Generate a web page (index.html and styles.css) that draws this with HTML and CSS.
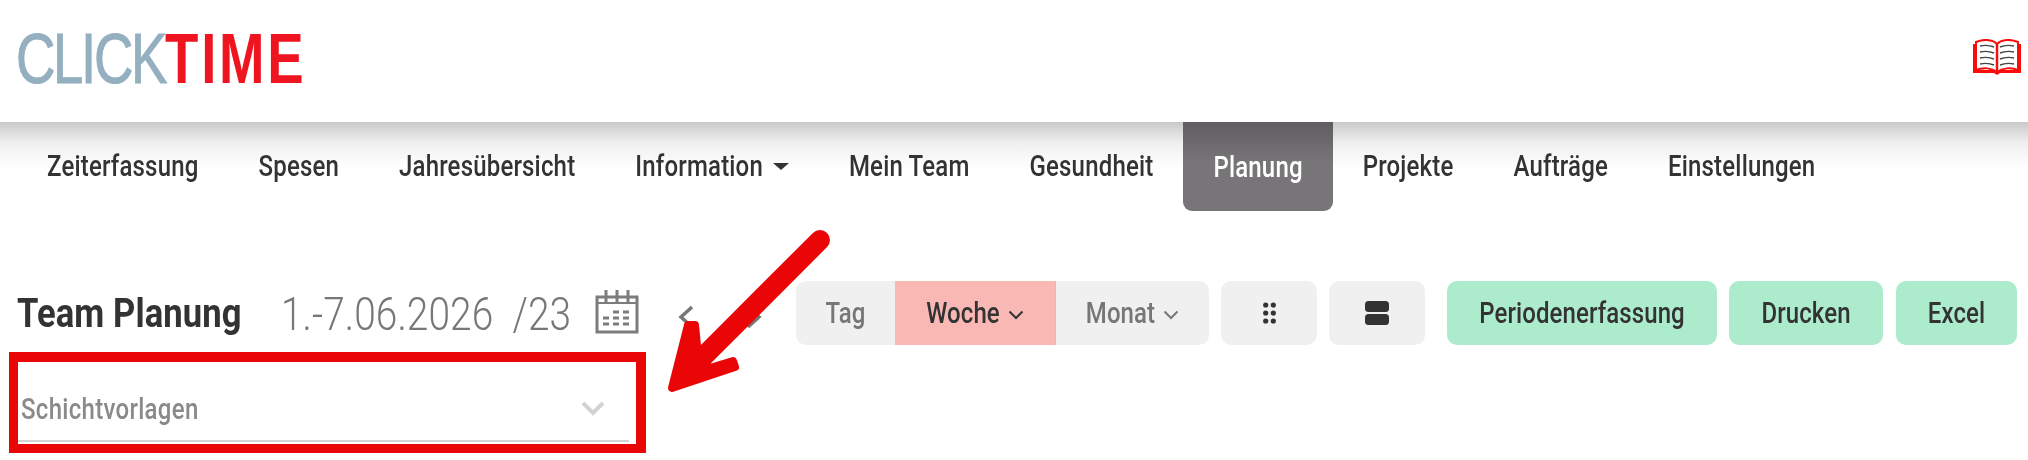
FILE: index.html
```html
<!DOCTYPE html>
<html lang="de">
<head>
<meta charset="utf-8">
<title>ClickTime – Team Planung</title>
<link rel="stylesheet" href="styles.css">
</head>
<body>
<div class="page">
  <header class="top">
    <div class="logo"><span class="logo-text"><span class="logo-click">CLICK</span><span class="logo-time">TIME</span></span></div>
    <svg class="book" width="48" height="36" viewBox="0 0 48 36">
      <path d="M0 5H3V31H21L24 33L27 31H45V5H48V34H27L24 36L21 34H0Z" fill="#fa0c0c"/>
      <path d="M3 31V3C10 0 19 0 24 5C29 0 38 0 45 3V31C38 28 29 29 24 33C19 29 10 28 3 31Z" fill="#fff" stroke="#fa0c0c" stroke-width="2"/>
      <path d="M24 5V33" stroke="#fa0c0c" stroke-width="2.5"/>
      <path d="M7 7C12 6 16 6 21 8M7 13C12 12 16 12 21 14M7 19C12 18 16 18 21 20M7 25C12 24 16 24 21 26M41 7C36 6 32 6 27 8M41 13C36 12 32 12 27 14M41 19C36 18 32 18 27 20M41 25C36 24 32 24 27 26" fill="none" stroke="#444" stroke-width="1.4"/>
    </svg>
  </header>
  <nav class="nav">
    <a class="nav-item"><span class="tall">Zeiterfassung</span></a>
    <a class="nav-item"><span class="tall">Spesen</span></a>
    <a class="nav-item"><span class="tall">Jahresübersicht</span></a>
    <a class="nav-item"><span class="tall">Information</span><i class="caret"></i></a>
    <a class="nav-item"><span class="tall">Mein Team</span></a>
    <a class="nav-item"><span class="tall">Gesundheit</span></a>
    <a class="nav-item active"><span class="tall">Planung</span></a>
    <a class="nav-item"><span class="tall">Projekte</span></a>
    <a class="nav-item"><span class="tall">Aufträge</span></a>
    <a class="nav-item"><span class="tall">Einstellungen</span></a>
  </nav>
  <main class="content">
    <div class="toolbar">
      <div class="heading">
        <h1 class="title"><span class="tall">Team Planung</span></h1>
        <span class="date"><span class="tall">1.-7.06.2026&nbsp; /23</span></span>
        <svg class="cal" width="44" height="44" viewBox="0 0 44 44">
          <path d="M2 7H42V42H2Z" fill="none" stroke="#7d7d7d" stroke-width="3"/>
          <path d="M2 13H42" stroke="#7d7d7d" stroke-width="2"/>
          <path d="M11 0V13M22 0V13M33 0V13" stroke="#7d7d7d" stroke-width="3"/>
          <path d="M18 22H24M28 22H34M8 28H14M18 28H24M28 28H34M8 34H14M18 34H24M28 34H34" stroke="#7d7d7d" stroke-width="3"/>
        </svg>
        <svg class="pager" width="16" height="24" viewBox="0 0 16 24"><path d="M14 2L3 12L14 22" fill="none" stroke="#777" stroke-width="3.5"/></svg>
        <svg class="pager pager-next" width="16" height="24" viewBox="0 0 16 24"><path d="M2 2L13 12L2 22" fill="none" stroke="#777" stroke-width="3.5"/></svg>
      </div>
      <div class="seg">
        <a class="seg-btn seg-tag"><span class="tall">Tag</span></a>
        <a class="seg-btn seg-week"><span class="tall">Woche</span><svg class="chev" width="16" height="10" viewBox="0 0 16 10"><path d="M1.5 1.5L8 8L14.5 1.5" fill="none" stroke="currentColor" stroke-width="2"/></svg></a>
        <a class="seg-btn seg-month"><span class="tall">Monat</span><svg class="chev" width="16" height="10" viewBox="0 0 16 10"><path d="M1.5 1.5L8 8L14.5 1.5" fill="none" stroke="currentColor" stroke-width="2"/></svg></a>
      </div>
      <a class="icon-btn">
        <svg width="13" height="22" viewBox="0 0 13 22" fill="#333"><circle cx="2.7" cy="3" r="2.6"/><circle cx="10.3" cy="3" r="2.6"/><circle cx="2.7" cy="11" r="2.6"/><circle cx="10.3" cy="11" r="2.6"/><circle cx="2.7" cy="19" r="2.6"/><circle cx="10.3" cy="19" r="2.6"/></svg>
      </a>
      <a class="icon-btn">
        <svg width="24" height="24" viewBox="0 0 24 24" fill="#333"><rect width="24" height="11" rx="3.5"/><rect y="13" width="24" height="11" rx="3.5"/></svg>
      </a>
      <a class="act act-period"><span class="tall">Periodenerfassung</span></a>
      <a class="act act-print"><span class="tall">Drucken</span></a>
      <a class="act act-excel"><span class="tall">Excel</span></a>
    </div>
    <div class="select">
      <span class="tall select-label">Schichtvorlagen</span>
      <svg class="select-chev" width="24" height="15" viewBox="0 0 24 15"><path d="M2 2L12 12L22 2" fill="none" stroke="#d2d2d2" stroke-width="4"/></svg>
      <div class="mark-box"></div>
    </div>
  </main>
  <svg class="arrow" width="2028" height="460" viewBox="0 0 2028 460">
    <path d="M820 240L702 358" stroke="#ea0606" stroke-width="20" stroke-linecap="round" fill="none"/>
    <path d="M672 388L688 325L695 325L698 356L710 368L733 361L735 367Z" fill="#ea0606" stroke="#ea0606" stroke-width="8" stroke-linejoin="round"/>
  </svg>
</div>
</body>
</html>
```
FILE: styles.css
```css
html, body {
  margin: 0;
  padding: 0;
  background: #fff;
}
.page {
  position: relative;
  width: 2028px;
  height: 460px;
  overflow: hidden;
  font-family: Roboto, "Liberation Sans", sans-serif;
  font-size: 24px;
  font-weight: 500;
  letter-spacing: 0.1px;
  color: #333;
}
.tall {
  display: inline-block;
  transform: scaleY(1.19);
  white-space: nowrap;
}
.top {
  height: 122px;
  display: flex;
  align-items: center;
  justify-content: space-between;
  padding: 0 7px 0 16px;
  box-sizing: border-box;
}
.logo {
  width: 288px;
  height: 50px;
  margin-top: -5px;
}
.logo-text {
  display: inline-block;
  font-family: "Liberation Sans", sans-serif;
  font-size: 70px;
  font-weight: 400;
  line-height: 50px;
  letter-spacing: 0;
  transform: scaleX(0.78);
  transform-origin: 0 50%;
  white-space: nowrap;
  filter: blur(0.6px);
}
.logo-click {
  color: #93afc0;
  letter-spacing: -3px;
  -webkit-text-stroke: 1px #93afc0;
}
.logo-time {
  color: #ef1520;
  font-weight: 700;
  letter-spacing: 3.5px;
}
.book { margin-top: -8px; }
.nav {
  height: 89px;
  display: flex;
  padding-left: 17px;
  letter-spacing: 0.18px;
  background: linear-gradient(#c9c9c9 0, #eeeeee 20px, #ffffff 46px);
}
.nav-item {
  display: flex;
  align-items: center;
  padding: 0 30px;
  margin-top: -1px;
}
.nav-item.active {
  margin-top: 0;
  color: #fff;
  background: linear-gradient(#5f5d5f 0, #777578 40px);
  border-radius: 0 0 9px 9px;
}
.caret {
  width: 0;
  height: 0;
  margin-left: 10px;
  border-left: 8px solid transparent;
  border-right: 8px solid transparent;
  border-top: 7px solid #333;
}
.content { padding-top: 70px; }
.toolbar {
  display: flex;
  align-items: stretch;
  height: 64px;
  padding-left: 17px;
}
.heading {
  display: flex;
  align-items: center;
  width: 779px;
}
.title {
  margin: 0;
  font-size: 34.6px;
  font-weight: 700;
  width: 264px;
}
.date {
  font-size: 38.8px;
  font-weight: 300;
  color: #777;
  width: 314px;
}
.cal { margin-top: -3px; }
.pager { margin: 8px 0 0 39px; }
.pager-next { margin-left: 52px; }
.seg {
  display: flex;
  width: 413px;
  background: #f0f0f0;
  border-radius: 10px;
  overflow: hidden;
}
.seg-btn {
  display: flex;
  align-items: center;
  justify-content: center;
  gap: 8px;
  box-sizing: border-box;
  color: #777;
}
.seg-tag { width: 99px; }
.seg-week {
  width: 161px;
  background: #fab8b5;
  border-right: 1px solid #c4c4c4;
  color: #333;
}
.seg-month { width: 153px; }
.chev { margin-top: 4px; }
.icon-btn {
  display: flex;
  align-items: center;
  justify-content: center;
  width: 96px;
  margin-left: 12px;
  background: #f0f0f0;
  border-radius: 10px;
}
.act {
  display: flex;
  align-items: center;
  justify-content: center;
  background: #adebcd;
  border-radius: 10px;
}
.act-period { width: 270px; margin-left: 22px; }
.act-print { width: 154px; margin-left: 12px; }
.act-excel { width: 121px; margin-left: 13px; }
.select {
  position: relative;
  display: flex;
  align-items: center;
  justify-content: space-between;
  box-sizing: border-box;
  width: 611px;
  height: 80px;
  margin: 17px 0 0 18px;
  padding: 16px 24px 0 3px;
  border-bottom: 2px solid #d3d3d3;
  letter-spacing: 0.3px;
  color: #8a8a8a;
}
.select-chev { margin-top: -2px; }
.mark-box {
  position: absolute;
  left: -9px;
  top: -10px;
  width: 618px;
  height: 82px;
  border: solid #ea0606;
  border-width: 10px 10px 9px 9px;
}
.arrow {
  position: absolute;
  left: 0;
  top: 0;
  pointer-events: none;
}
```
